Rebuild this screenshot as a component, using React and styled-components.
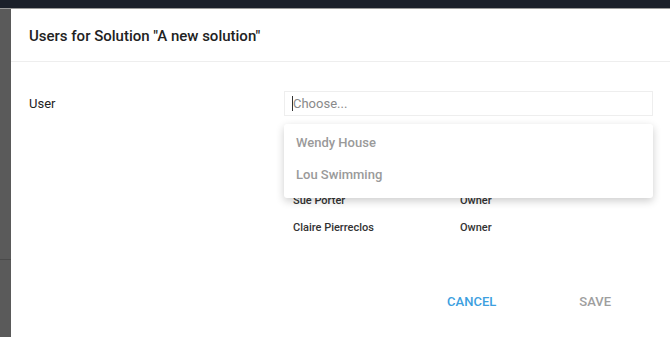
import React from 'react'
import styled, { createGlobalStyle } from 'styled-components'

const GlobalStyle = createGlobalStyle`
  html, body {
    margin: 0;
    padding: 0;
    background: #595959;
    font-family: Roboto, "Liberation Sans", sans-serif;
  }
`

const users = [
  { name: 'Sue Porter', role: 'Owner' },
  { name: 'Claire Pierreclos', role: 'Owner' },
]

const options = ['Wendy House', 'Lou Swimming']

const App = () => {
  return (
    <Page>
      <GlobalStyle />
      <TopBar />
      <Main>
        <Backdrop />
        <Dialog>
          <Header>
            <Title>Users for Solution "A new solution"</Title>
          </Header>
          <Body>
            <Row>
              <Label>User</Label>
              <Field>
                <Input>
                  <Caret />
                  <Placeholder>Choose...</Placeholder>
                </Input>
                <Table>
                  {users.map(u => (
                    <TableRow key={u.name}>
                      <Cell width="167px">{u.name}</Cell>
                      <Cell>{u.role}</Cell>
                    </TableRow>
                  ))}
                </Table>
                <Menu>
                  {options.map(o => (
                    <Option key={o}>{o}</Option>
                  ))}
                </Menu>
              </Field>
            </Row>
          </Body>
          <Footer>
            <Button color="#3d9fdf">Cancel</Button>
            <Button color="#9e9e9e">Save</Button>
          </Footer>
        </Dialog>
      </Main>
    </Page>
  )
}

const Page = styled.div`
  width: 670px;
  height: 337px;
  display: flex;
  flex-direction: column;
  overflow: hidden;
`

const TopBar = styled.div`
  height: 8px;
  flex: none;
  background: #1b202a;
  border-bottom: 1px solid #9a9a9a;
`

const Main = styled.div`
  flex: 1;
  display: flex;
`

const Backdrop = styled.div`
  width: 11px;
  flex: none;
  background: #5a5a5a;
  background-image: linear-gradient(#5a5a5a 250px, #4a4a4a 250px, #4a4a4a 251px, #5a5a5a 251px);
`

const Dialog = styled.div`
  flex: 1;
  background: #fff;
  display: flex;
  flex-direction: column;
`

const Header = styled.div`
  padding: 17px 18px 15px;
  border-bottom: 1px solid #eeeeee;
`

const Title = styled.h2`
  margin: 0;
  font-size: 15px;
  line-height: 20px;
  font-weight: 500;
  color: #222;
`

const Body = styled.div`
  padding: 29px 17px 0 18px;
`

const Row = styled.div`
  display: flex;
  align-items: flex-start;
`

const Label = styled.div`
  width: 255px;
  flex: none;
  font-size: 13px;
  line-height: 25px;
  color: #222;
`

const Field = styled.div`
  flex: 1;
  position: relative;
`

const Input = styled.div`
  height: 23px;
  border: 1px solid #eeeeee;
  display: flex;
  align-items: center;
  padding-left: 7px;
`

const Caret = styled.span`
  width: 1px;
  height: 15px;
  background: #333;
`

const Placeholder = styled.span`
  font-size: 13px;
  color: #8a8a8a;
`

const Table = styled.div`
  margin-top: 71px;
  padding-left: 9px;
  display: flex;
  flex-direction: column;
`

const TableRow = styled.div`
  display: flex;
  height: 27px;
  align-items: center;
`

const Cell = styled.div`
  width: ${p => p.width || 'auto'};
  font-size: 11px;
  font-weight: 500;
  color: #333;
`

const Menu = styled.div`
  position: absolute;
  top: 33px;
  left: 0;
  right: 0;
  background: #fff;
  border-radius: 3px;
  box-shadow: 0 3px 8px rgba(0, 0, 0, 0.2);
  padding: 2px 0 8px;
`

const Option = styled.div`
  height: 32px;
  display: flex;
  align-items: center;
  padding-left: 12px;
  font-size: 13px;
  font-weight: 500;
  color: #9a9a9a;
`

const Footer = styled.div`
  margin-top: auto;
  display: flex;
  justify-content: flex-end;
  gap: 67px;
  padding: 0 51px 22px 0;
`

const Button = styled.button`
  background: none;
  border: none;
  padding: 6px 8px;
  font-family: Roboto, "Liberation Sans", sans-serif;
  font-size: 13px;
  font-weight: 500;
  text-transform: uppercase;
  color: ${p => p.color};
  cursor: pointer;
`

export default App
